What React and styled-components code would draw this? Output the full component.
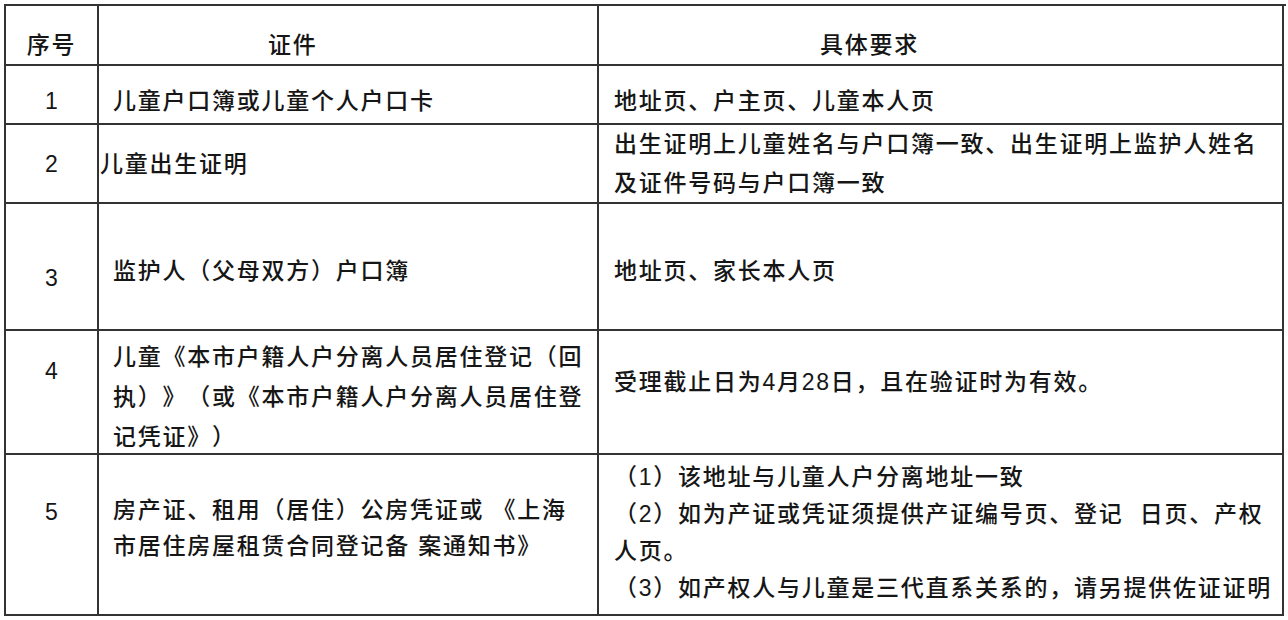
import React from 'react';
import styled, { createGlobalStyle } from 'styled-components';

const GlobalStyle = createGlobalStyle`
  html, body {
    margin: 0;
    padding: 0;
    background: #ffffff;
  }
  body {
    font-family: "Liberation Sans", "Noto Sans CJK SC", sans-serif;
    color: #161616;
  }
`;

const Page = styled.div`
  padding: 4px 0 0 4px;
  width: 1288px;
  height: 620px;
  box-sizing: border-box;
  overflow: hidden;
`;

const Table = styled.div`
  display: grid;
  grid-template-columns: 93px 500px 685px;
  grid-template-rows: 60px 59px 79px 127px 124px 161px;
  width: 1280px;
  border-top: 2px solid #333;
  border-left: 2px solid #333;
`;

const Cell = styled.div`
  box-sizing: border-box;
  border-right: 2px solid #333;
  border-bottom: 2px solid #333;
  display: flex;
  flex-direction: column;
  justify-content: center;
  align-items: ${(p) => (p.$center ? 'center' : 'flex-start')};
  padding-left: ${(p) => p.$left || 0}px;
  padding-top: ${(p) => Math.max(0, (p.$shift || 0) * 2)}px;
  padding-bottom: ${(p) => Math.max(0, -(p.$shift || 0) * 2)}px;
  overflow: hidden;
`;

const Num = styled.span`
  font-size: 23px;
  line-height: 28px;
`;

const Text = styled.div`
  font-size: 23px;
  font-weight: 500;
  letter-spacing: 1.75px;
  line-height: ${(p) => p.$lh || 30}px;
  white-space: nowrap;
  text-spacing-trim: space-all;
`;

const rows = [
  {
    no: '1',
    s: [6, 6, 6],
    left: 14,
    doc: ['儿童户口簿或儿童个人户口卡'],
    req: ['地址页、户主页、儿童本人页'],
  },
  {
    no: '2',
    s: [0, 0, 0],
    left: 1,
    doc: ['儿童出生证明'],
    req: ['出生证明上儿童姓名与户口簿一致、出生证明上监护人姓名', '及证件号码与户口簿一致'],
    reqLh: 39,
  },
  {
    no: '3',
    s: [11, 4, 4],
    left: 14,
    doc: ['监护人（父母双方）户口簿'],
    req: ['地址页、家长本人页'],
  },
  {
    no: '4',
    s: [-21, 5, -10],
    left: 14,
    doc: ['儿童《本市户籍人户分离人员居住登记（回', '执）》（或《本市户籍人户分离人员居住登', '记凭证》）'],
    docLh: 40,
    req: ['受理截止日为4月28日，且在验证时为有效。'],
  },
  {
    no: '5',
    s: [-23, -7, -2],
    left: 14,
    doc: ['房产证、租用（居住）公房凭证或 《上海', '市居住房屋租赁合同登记备 案通知书》'],
    docLh: 36,
    req: [
      '（1）该地址与儿童人户分离地址一致',
      '（2）如为产证或凭证须提供产证编号页、登记\u00a0 日页、产权',
      '人页。',
      '（3）如产权人与儿童是三代直系关系的，请另提供佐证证明',
    ],
    reqLh: 37,
  },
];

export default function App() {
  return (
    <Page>
      <GlobalStyle />
      <Table>
        <Cell $center $shift={10}>
          <Text>序号</Text>
        </Cell>
        <Cell $left={169} $shift={10}>
          <Text>证件</Text>
        </Cell>
        <Cell $left={221} $shift={10}>
          <Text>具体要求</Text>
        </Cell>
        {rows.map((r) => (
          <React.Fragment key={r.no}>
            <Cell $center $shift={r.s[0]}>
              <Num>{r.no}</Num>
            </Cell>
            <Cell $left={r.left} $shift={r.s[1]}>
              {r.doc.map((line) => (
                <Text key={line} $lh={r.docLh}>{line}</Text>
              ))}
            </Cell>
            <Cell $left={15} $shift={r.s[2]}>
              {r.req.map((line) => (
                <Text key={line} $lh={r.reqLh}>{line}</Text>
              ))}
            </Cell>
          </React.Fragment>
        ))}
      </Table>
    </Page>
  );
}
